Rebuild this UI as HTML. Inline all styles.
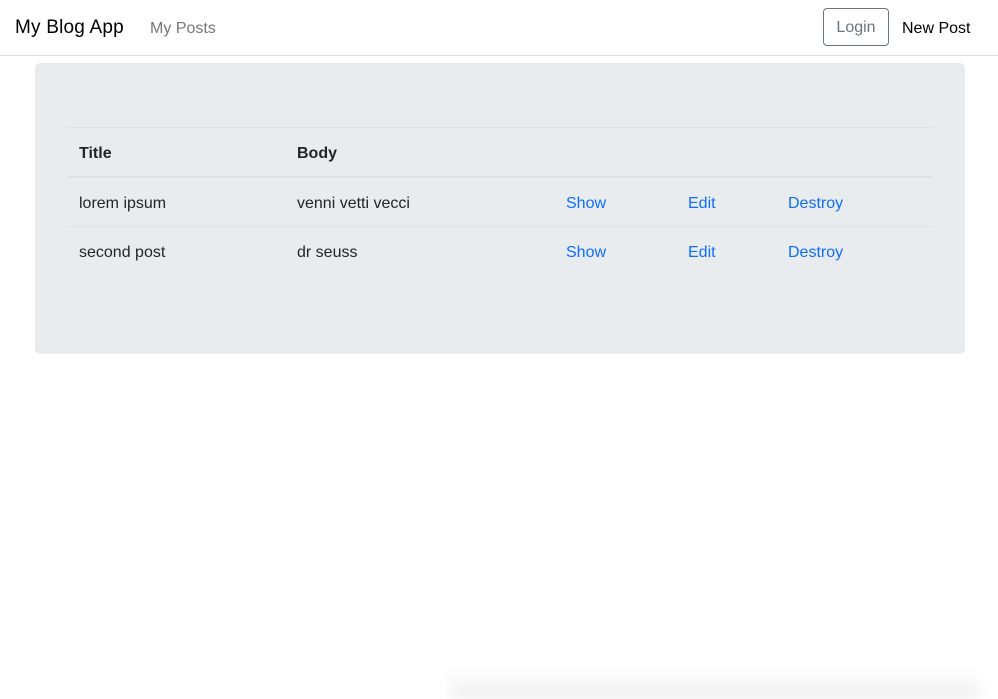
<!DOCTYPE html>
<html><head><style>
body{margin:0;width:998px;height:699px;overflow:hidden;background:#fff;font-family:"Liberation Sans",sans-serif;color:#212529;position:relative}
.nav{height:55px;border-bottom:1px solid #dee2e6;position:relative}
.brand{position:absolute;left:15px;top:17px;font-size:19px;color:#000;letter-spacing:0.2px}
.myp{position:absolute;left:150px;top:20px;font-size:16px;color:#777}
.login{position:absolute;left:823px;top:8px;border:1px solid #6c757d;border-radius:4px;box-sizing:border-box;width:66px;height:38px;text-align:center;line-height:38px;font-size:16px;color:#6c757d}
.newp{position:absolute;left:902px;top:20px;font-size:16px;color:#000}
.jumbo{position:absolute;left:35px;top:63px;width:930px;height:291px;background:#e9ecef;border-radius:5px}
.line{position:absolute;left:32px;width:866px;height:1px;background:#dee2e6}
.t{position:absolute;font-size:16px}
.sh{position:absolute;left:450px;bottom:0;width:530px;height:30px;background:linear-gradient(#fff,#eee);filter:blur(6px)}
</style></head><body>
<div class="nav"><span class="brand">My Blog App</span><span class="myp">My Posts</span><span class="login">Login</span><span class="newp">New Post</span></div>
<div class="jumbo">
<div class="line" style="top:64px"></div>
<div class="line" style="top:113px;height:2px"></div>
<div class="line" style="top:163px"></div>
<span class="t" style="left:44px;top:82px;font-weight:bold">Title</span>
<span class="t" style="left:262px;top:82px;font-weight:bold">Body</span>
<span class="t" style="left:44px;top:132px">lorem ipsum</span>
<span class="t" style="left:262px;top:132px">venni vetti vecci</span>
<span class="t" style="left:531px;top:132px;color:#0d6efd">Show</span>
<span class="t" style="left:653px;top:132px;color:#0d6efd">Edit</span>
<span class="t" style="left:753px;top:132px;color:#0d6efd">Destroy</span>
<span class="t" style="left:44px;top:181px">second post</span>
<span class="t" style="left:262px;top:181px">dr seuss</span>
<span class="t" style="left:531px;top:181px;color:#0d6efd">Show</span>
<span class="t" style="left:653px;top:181px;color:#0d6efd">Edit</span>
<span class="t" style="left:753px;top:181px;color:#0d6efd">Destroy</span>
</div>
<div class="sh"></div>
</body></html>
